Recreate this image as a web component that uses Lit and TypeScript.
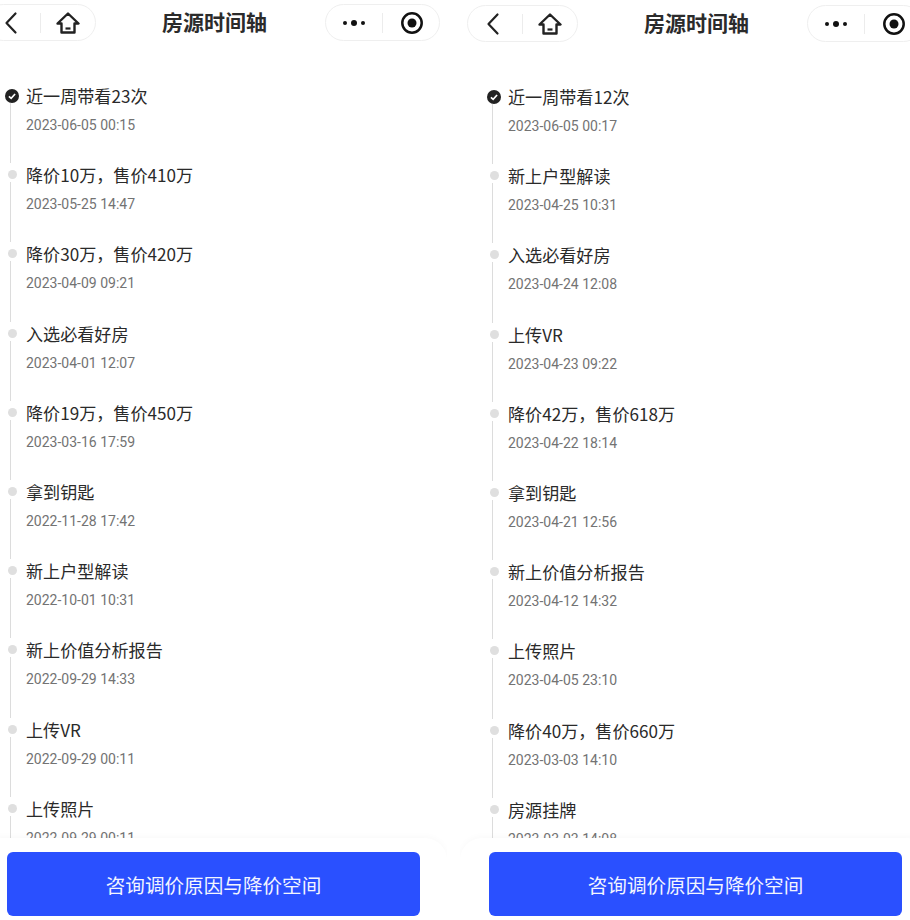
import { LitElement, html, css } from "lit";
import { customElement } from "lit/decorators.js";

type Ev = [string, string];
const left: Ev[] = [
  ["近一周带看23次", "2023-06-05 00:15"],
  ["降价10万，售价410万", "2023-05-25 14:47"],
  ["降价30万，售价420万", "2023-04-09 09:21"],
  ["入选必看好房", "2023-04-01 12:07"],
  ["降价19万，售价450万", "2023-03-16 17:59"],
  ["拿到钥匙", "2022-11-28 17:42"],
  ["新上户型解读", "2022-10-01 10:31"],
  ["新上价值分析报告", "2022-09-29 14:33"],
  ["上传VR", "2022-09-29 00:11"],
  ["上传照片", "2022-09-29 00:11"],
];
const right: Ev[] = [
  ["近一周带看12次", "2023-06-05 00:17"],
  ["新上户型解读", "2023-04-25 10:31"],
  ["入选必看好房", "2023-04-24 12:08"],
  ["上传VR", "2023-04-23 09:22"],
  ["降价42万，售价618万", "2023-04-22 18:14"],
  ["拿到钥匙", "2023-04-21 12:56"],
  ["新上价值分析报告", "2023-04-12 14:32"],
  ["上传照片", "2023-04-05 23:10"],
  ["降价40万，售价660万", "2023-03-03 14:10"],
  ["房源挂牌", "2023-03-03 14:08"],
];

@customElement("app-root")
export class AppRoot extends LitElement {
  static styles = css`
    :host { display: block; width: 910px; height: 920px; overflow: hidden; background: #fff;
      font-family: "Noto Sans CJK SC", "Noto Sans", sans-serif; color: #222; }
    .stage { display: flex; gap: 13px; margin-left: -22px; width: 960px; height: 920px; }
    .panel { width: 469px; height: 920px; flex: none; display: flex; flex-direction: column; overflow: hidden; box-sizing: border-box; }
    .panel.second { padding-top: 1px; }
    .nav { height: 45px; flex: none; display: grid; grid-template-columns: 1fr auto 1fr; align-items: center; padding: 0 7px; }
    .capsule { height: 37px; box-sizing: border-box; border: 1px solid #efefef; border-radius: 19px; display: flex; align-items: center; }
    .cap-left { width: 111px; justify-self: start; padding-left: 17px; }
    .cap-right { width: 115px; justify-self: end; padding-left: 16px; }
    .sep { width: 1px; height: 20px; background: #ececec; }
    .back { margin-right: 21px; }
    .home { margin-left: 15px; }
    .more { margin-right: 16px; }
    .target { margin-left: 17px; }
    .title { font-size: 21px; font-weight: 700; color: #2b2b2b; line-height: 43px; white-space: nowrap; padding: 0 0 2px 4px; }
    .list { flex: 1; min-height: 0; overflow: hidden; padding: 37px 0 0 22px; }
    .item { display: grid; grid-template-columns: 22px 1fr; column-gap: 4px; height: 79.2px; }
    .rail { display: flex; flex-direction: column; align-items: center; }
    .dot { width: 9px; height: 9px; border-radius: 50%; background: #dfdfdf; margin: 9px 0 3px 2px; flex: none; }
    .check { width: 14px; height: 14px; margin: 7px 0 0 1px; flex: none; display: block; }
    .line { width: 1px; flex: 1; background: #dcdcdc; margin: 0 2px -2px 0; }
    .name { font-size: 17.1px; line-height: 26px; margin-top: 1px; color: #2a2a2a; white-space: nowrap; }
    .time { font-size: 14px; line-height: 18px; margin-top: 7px; color: #737373; white-space: nowrap; font-family: Roboto, "Noto Sans", sans-serif; }
    .footer { flex: none; height: 82px; box-sizing: border-box; background: #fff; border-radius: 22px 22px 0 0; box-shadow: 0 -2px 6px rgba(0,0,0,.025); padding: 14px 27px 0 29px; }
    .btn { display: flex; align-items: center; justify-content: center; width: 413px; height: 64px; border-radius: 6px; background: #2a50ff; color: #f2f5ff; font-size: 19.6px; }
  `;

  private panel(items: Ev[], second = false) {
    return html`<section class="panel ${second ? "second" : ""}">
      <div class="nav">
        <div class="capsule cap-left">
          <svg class="back" width="16" height="24" viewBox="0 0 16 24" fill="none" stroke="#222" stroke-width="2.2" stroke-linecap="round" stroke-linejoin="round"><path d="M12.5 2.5 L3.5 12 L12.5 21.5"/></svg>
          <span class="sep"></span>
          <svg class="home" width="24" height="24" viewBox="0 0 24 24" fill="none" stroke="#222" stroke-width="2.4" stroke-linejoin="round"><path d="M1.5 12.5 L12 2.5 L22.5 12.5 H18.5 V21.5 H5.5 V12.5 Z"/><path d="M9.5 17.5 H14.5" stroke-width="2.2"/></svg>
        </div>
        <div class="title">房源时间轴</div>
        <div class="capsule cap-right">
          <svg class="more" width="24" height="8" viewBox="0 0 24 8" fill="#111"><circle cx="3" cy="4" r="2"/><circle cx="12" cy="4" r="3"/><circle cx="21" cy="4" r="2"/></svg>
          <span class="sep"></span>
          <svg class="target" width="24" height="24" viewBox="0 0 24 24"><circle cx="12" cy="12" r="9.7" fill="none" stroke="#111" stroke-width="2.5"/><circle cx="12" cy="12" r="4.5" fill="#111"/></svg>
        </div>
      </div>
      <div class="list">
        ${items.map(([n, t], i) => html`<div class="item">
          <div class="rail">
            ${i === 0
              ? html`<svg class="check" viewBox="0 0 15 15"><circle cx="7.5" cy="7.5" r="7.5" fill="#222"/><path d="M4.2 7.8 L6.6 10 L10.8 5.4" fill="none" stroke="#fff" stroke-width="1.8"/></svg>`
              : html`<span class="dot"></span>`}
            <span class="line"></span>
          </div>
          <div>
            <div class="name">${n}</div>
            <div class="time">${t}</div>
          </div>
        </div>`)}
      </div>
      <div class="footer"><div class="btn">咨询调价原因与降价空间</div></div>
    </section>`;
  }

  render() {
    return html`<div class="stage">${this.panel(left)}${this.panel(right, true)}</div>`;
  }
}
